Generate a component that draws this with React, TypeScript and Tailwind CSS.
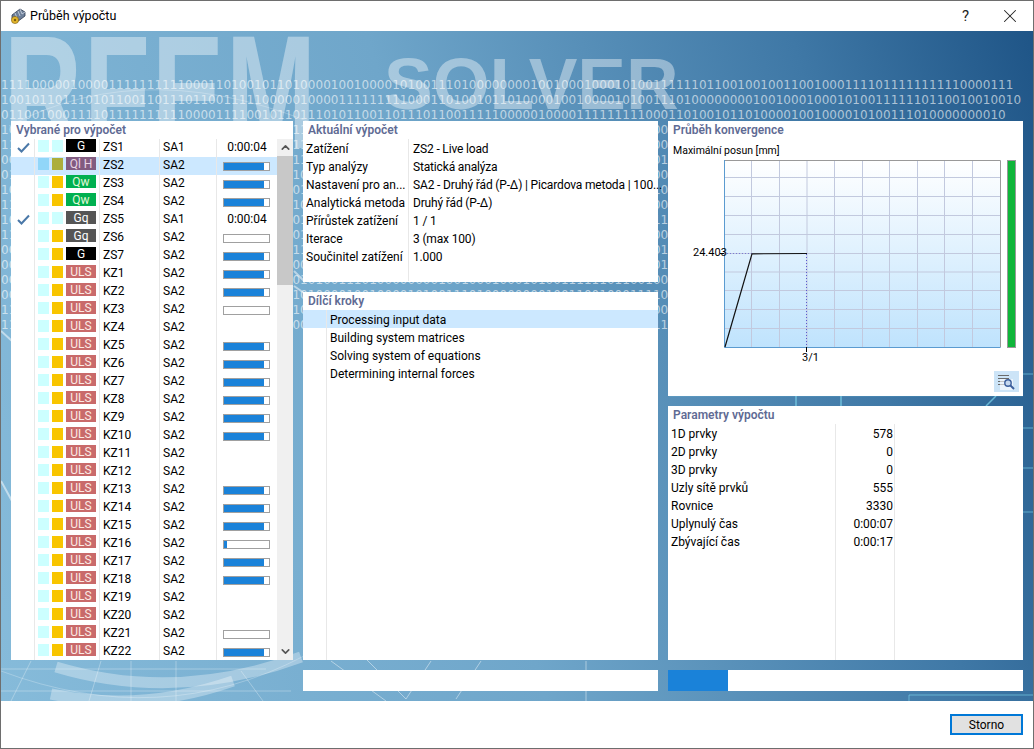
import { ChevronDown, ChevronUp, X } from "lucide-react"

const bits = [
  "111100000100001111111111000110100101101000010010000101001110100000000100100010001010011111101100100100110010001111011111111110000111",
  "10010110111010110011011101100111110000010000111111111000110100101101000010010000101001110100000000100100010001010011111101100100100101",
  "01100100011110111111111100001111001011011101011001101110110011111000001000011111111100011010010110100001001000010100111010000000010",
]

const binaryRows = Array.from({ length: 17 }, (_, i) => {
  const base = bits[i % 3]
  const shift = i < 3 ? 0 : (i * 17) % 60
  return (base.slice(shift) + base.slice(0, shift)).slice(0, 133)
})

type Row = { id: string; tag: string; sa: string; sw?: boolean; state: string; check?: boolean; sel?: boolean }

const zs: Row[] = [
  { id: "ZS1", tag: "G", sa: "SA1", sw: true, state: "time", check: true },
  { id: "ZS2", tag: "Ql H", sa: "SA2", state: "full", sel: true },
  { id: "ZS3", tag: "Qw", sa: "SA2", state: "full" },
  { id: "ZS4", tag: "Qw", sa: "SA2", state: "full" },
  { id: "ZS5", tag: "Gq", sa: "SA1", sw: true, state: "time", check: true },
  { id: "ZS6", tag: "Gq", sa: "SA2", state: "empty" },
  { id: "ZS7", tag: "G", sa: "SA2", state: "full" },
]

const kzStates = [
  "full", "full", "empty", "none", "full", "full", "full", "full", "full", "full", "none",
  "none", "full", "full", "full", "low", "full", "full", "none", "none", "empty", "full",
]

const rows: Row[] = [
  ...zs,
  ...kzStates.map((state, i) => ({ id: `KZ${i + 1}`, tag: "ULS", sa: "SA2", state })),
]

const tagClass: Record<string, string> = {
  G: "bg-black text-white",
  "Ql H": "bg-[#815b80] text-[#e8d4e4]",
  Qw: "bg-[#00b050] text-[#e4f7d8]",
  Gq: "bg-[#555555] text-white",
  ULS: "bg-[#c96a6a] text-[#fbe9e4]",
}

const current = [
  ["Zatížení", "ZS2 - Live load"],
  ["Typ analýzy", "Statická analýza"],
  ["Nastavení pro an...", "SA2 - Druhý řád (P-Δ) | Picardova metoda | 100..."],
  ["Analytická metoda", "Druhý řád (P-Δ)"],
  ["Přírůstek zatížení", "1 / 1"],
  ["Iterace", "3 (max 100)"],
  ["Součinitel zatížení", "1.000"],
]

const steps = ["Processing input data", "Building system matrices", "Solving system of equations", "Determining internal forces"]

const params = [
  ["1D prvky", "578"],
  ["2D prvky", "0"],
  ["3D prvky", "0"],
  ["Uzly sítě prvků", "555"],
  ["Rovnice", "3330"],
  ["Uplynulý čas", "0:00:07"],
  ["Zbývající čas", "0:00:17"],
]

function PanelTitle({ children }: { children: string }) {
  return <div className="h-[18px] text-[12px] leading-[18px] font-semibold text-[#5f6b94] truncate">{children}</div>
}

function Bar({ state }: { state: string }) {
  if (state === "none") return null
  if (state === "time") return <span className="w-full -translate-y-px text-center">0:00:04</span>
  return (
    <div className="ml-[6px] mt-[1px] h-[9px] w-[47px] border border-[#a0a0a0] bg-white">
      {state === "full" && <div className="h-full w-[40px] bg-[#1a82d9]" />}
      {state === "low" && <div className="h-full w-[3px] bg-[#1a82d9]" />}
    </div>
  )
}

function LoadRow({ row }: { row: Row }) {
  const first = row.sel ? "bg-[#91d6f9]" : "bg-[#ccffff]"
  const second = row.sel ? "bg-[#acae3c]" : row.sw ? "bg-[#ccffff]" : "bg-[#f8c500]"
  return (
    <div className={`flex h-[18px] shrink-0 items-center leading-[17px] ${row.sel ? "bg-[#cce8ff]" : ""}`}>
      <div className="flex h-full w-[23px] items-center justify-center">
        {row.check && (
          <svg width="13" height="11" viewBox="0 0 13 11" className="ml-[1px] mb-[1px]">
            <path d="M1 6 L4.5 9.5 L12 1.5" fill="none" stroke="#4a78a8" strokeWidth="2" />
          </svg>
        )}
      </div>
      <div className="flex h-full w-[65px] items-start gap-[3px] border-l border-[#e8e8e8] pl-[3px]">
        <div className={`mt-[1px] h-[12px] w-[11px] ${first}`} />
        <div className={`mt-[1px] h-[12px] w-[11px] ${second}`} />
        <div className={`h-[13px] w-[30px] text-center text-[12px] leading-[14px] ${tagClass[row.tag]}`}>{row.tag}</div>
      </div>
      <div className="h-full w-[60px] border-l border-[#e8e8e8] pl-[3px]">{row.id}</div>
      <div className="h-full w-[57px] border-l border-[#e8e8e8] pl-[3px]">{row.sa}</div>
      <div className="flex h-full w-[61px] items-center border-l border-[#e8e8e8]">
        <Bar state={row.state} />
      </div>
    </div>
  )
}

function Chart() {
  const vs = [27, 55, 82.5, 110, 138, 165, 193, 220, 248]
  const hs = [17, 36, 55, 74, 93, 111.5, 130, 149, 168]
  return (
    <svg width="277" height="188" viewBox="0 0 277 188" className="block">
      <defs>
        <linearGradient id="plot" x1="0" y1="0" x2="0" y2="1">
          <stop offset="0" stopColor="#ffffff" />
          <stop offset="1" stopColor="#bfe3fd" />
        </linearGradient>
      </defs>
      <rect x="0" y="0" width="277" height="188" fill="url(#plot)" />
      {vs.map((x) => (
        <line key={x} x1={x + 0.5} y1="0" x2={x + 0.5} y2="187" stroke="#c2c9de" />
      ))}
      {hs.map((y) => (
        <line key={y} x1="0" y1={y + 0.5} x2="276" y2={y + 0.5} stroke="#c2c9de" />
      ))}
      <path d="M0.5 0.5 H276.5 V187" fill="none" stroke="#999999" />
      <path d="M0.5 0 V187.5 H276.5" fill="none" stroke="#5b9bd0" />
      <line x1="0" y1="93.5" x2="28" y2="93.5" stroke="#7a7ad0" strokeDasharray="1 2" />
      <line x1="82.5" y1="94" x2="82.5" y2="187" stroke="#5a5ad0" strokeDasharray="1 2" />
      <path d="M1 187 L28 93.8 L83 93.5" fill="none" stroke="#111111" strokeWidth="1.2" />
    </svg>
  )
}

function Background() {
  return (
    <div className="absolute inset-0 overflow-hidden">
      <div className="absolute left-[3px] top-[-20px] origin-top-left scale-y-[1.5] font-['Liberation_Sans',sans-serif] text-[108px] leading-[108px] font-bold tracking-[2px] text-white/40">
        RFEM
      </div>
      <div className="absolute left-[383px] top-[16px] font-['Liberation_Sans',sans-serif] text-[73px] leading-[73px] font-bold text-white/40">
        SOLVER
      </div>
      <svg width="1032" height="670" viewBox="0 0 1032 670" className="absolute left-0 top-0">
        <path d="M8 95 Q150 20 330 100" fill="none" stroke="#ffffff" strokeOpacity="0.25" />
        <path d="M55 636 Q175 672 300 626" fill="none" stroke="#ffffff" strokeOpacity="0.32" strokeWidth="11" />
        <path d="M50 663 Q140 682 232 650" fill="none" stroke="#ffffff" strokeOpacity="0.32" strokeWidth="11" />
        <path d="M0 640 Q160 700 303 625" fill="none" stroke="#ffffff" strokeOpacity="0.25" />
        <path d="M0 660 H290 M0 638 H265" stroke="#ffffff" strokeOpacity="0.3" />
        <path d="M30 630 L10 670 M100 630 L88 670 M175 630 V670 M130 630 V670 M240 640 L262 670" stroke="#ffffff" strokeOpacity="0.3" />
        <path d="M365 628 L405 668 L430 630 M330 630 L385 670 M480 630 L455 668 M585 630 V670" fill="none" stroke="#ffffff" strokeOpacity="0.45" />
        <path d="M795 365 V375 M840 365 V375 M985 375 L995 365" stroke="#7fd8ee" strokeOpacity="0.7" strokeWidth="1.5" />
        <path d="M908 670 V664 H1032 M1022 343 H1032 M1022 397 H1032 M1022 437 H1032 M1022 481 H1032" fill="none" stroke="#7fd8ee" strokeOpacity="0.6" />
        <path d="M668 365 H1022" stroke="#7fd8ee" strokeOpacity="0.25" />
        <path d="M0 300 L11 310 M0 450 L11 470 M293 240 L303 250 M293 255 L303 262" stroke="#ffffff" strokeOpacity="0.5" strokeWidth="2" />
      </svg>
      <div className="absolute left-0 top-[47px] font-['DejaVu_Sans',sans-serif] text-[12px] leading-[15px] tracking-[0.035px] text-white/60">
        {binaryRows.map((r, i) => (
          <div key={i} className="h-[15px] whitespace-pre">
            {r}
          </div>
        ))}
      </div>
    </div>
  )
}

export default function App() {
  return (
    <div className="flex h-[749px] w-[1034px] flex-col overflow-hidden border border-[#6e6e6e] bg-white font-['Roboto',sans-serif] text-[12px] text-black">
      <header className="flex h-[30px] shrink-0 items-center pl-[8px]">
        <svg width="18" height="18" viewBox="0 0 18 18" className="shrink-0">
          <path d="M3 8 L11 2 L16 5 L16 9 L8 15 L3 12 Z" fill="#6d7f99" stroke="#2d3a50" strokeWidth="0.8" />
          <path d="M11 2 L13 7 L16 5 M6 6 L8 11 M9 4 L11 9" fill="none" stroke="#cfd8e4" strokeWidth="0.8" />
          <circle cx="6" cy="13" r="3.6" fill="#e2b52c" stroke="#7a5d10" strokeWidth="0.6" />
          <circle cx="6" cy="13" r="1.2" fill="#7a5d10" />
        </svg>
        <span className="ml-[3px] text-[12.5px]">Průběh výpočtu</span>
        <span className="ml-auto mr-[30px] text-[15px] text-[#222222]">?</span>
        <X className="mr-[12px] h-[22px] w-[22px] text-[#222222]" strokeWidth={1.1} />
      </header>

      <main className="relative flex h-[670px] shrink-0 gap-[10px] bg-[linear-gradient(75deg,#86bbda_0%,#6fa6ca_45%,#3f78a6_80%,#1f5587_100%)] pt-[90px] pl-[10px]">
        <Background />

        <section className="relative flex h-[539px] w-[282px] shrink-0 flex-col overflow-hidden bg-white">
          <div className="pl-[5px]">
            <PanelTitle>Vybrané pro výpočet</PanelTitle>
          </div>
          <div className="flex min-h-0 flex-1">
            <div className="flex w-[266px] flex-col overflow-hidden">
              {rows.map((row) => (
                <LoadRow key={row.id} row={row} />
              ))}
            </div>
            <div className="flex w-[16px] flex-col bg-[#f0f0f0]">
              <div className="flex h-[17px] items-center justify-center">
                <ChevronUp className="h-[13px] w-[13px] text-[#555555]" strokeWidth={3} />
              </div>
              <div className="h-[129px] bg-[#c8c8c8]" />
              <div className="mt-auto flex h-[17px] items-center justify-center">
                <ChevronDown className="h-[13px] w-[13px] text-[#555555]" strokeWidth={3} />
              </div>
            </div>
          </div>
        </section>

        <div className="relative flex w-[355px] shrink-0 flex-col">
          <section className="h-[161px] bg-white">
            <div className="pl-[5px]">
              <PanelTitle>Aktuální výpočet</PanelTitle>
            </div>
            <div className="flex h-[142px]">
              <div className="w-[106px] shrink-0 border-r border-[#e8e8e8] pl-[3px]">
                {current.map(([label]) => (
                  <div key={label} className="h-[18px] whitespace-nowrap leading-[20px]">
                    {label}
                  </div>
                ))}
              </div>
              <div className="pl-[4px] tracking-[-0.16px]">
                {current.map(([label, value]) => (
                  <div key={label} className="h-[18px] whitespace-nowrap leading-[20px]">
                    {value}
                  </div>
                ))}
              </div>
            </div>
          </section>
          <section className="mt-[10px] h-[368px] bg-white">
            <div className="pl-[5px]">
              <PanelTitle>Dílčí kroky</PanelTitle>
            </div>
            <div className="relative">
              {steps.map((step, i) => (
                <div key={step} className={`h-[18px] pl-[27px] leading-[20px] ${i === 0 ? "bg-[#cce8ff]" : ""}`}>
                  {step}
                </div>
              ))}
              <div className="absolute bottom-[-278px] left-[23px] top-0 w-px bg-[#e8e8e8]" />
            </div>
          </section>
          <div className="mt-[10px] h-[21px] bg-white" />
        </div>

        <div className="relative flex w-[355px] shrink-0 flex-col">
          <section className="relative h-[275px] bg-white pl-[5px]">
            <PanelTitle>Průběh konvergence</PanelTitle>
            <div className="mt-[3px] h-[18px] text-[10.5px] leading-[18px]">Maximální posun [mm]</div>
            <div className="ml-[51px] flex items-start gap-[6px]">
              <Chart />
              <div className="h-[188px] w-[9px] border border-[#999999] bg-[#0fb53a]" />
            </div>
            <span className="absolute left-[25px] top-[124px] text-[11px] leading-[16px]">24.403</span>
            <div className="absolute left-[52px] top-[132px] h-px w-[4px] bg-black" />
            <span className="absolute left-[134px] top-[229px] text-[11px] leading-[16px]">3/1</span>
            <div className="absolute left-[138px] top-[226px] h-[5px] w-px bg-black" />
            <button className="absolute left-[326px] top-[250px] flex h-[21px] w-[25px] items-center justify-center bg-[#cce4f7]">
              <svg width="17" height="16" viewBox="0 0 17 16">
                <path d="M0 1.5 H11 M0 4.5 H11 M0 7.5 H7 M0 10.5 H7" stroke="#6b6b6b" />
                <rect x="2" y="5" width="13" height="11" fill="#ffffff" fillOpacity="0.6" />
                <circle cx="10" cy="9" r="3.2" fill="#c6d8ee" stroke="#3c5f9c" strokeWidth="1.4" />
                <path d="M12.5 11.5 L16 15" stroke="#3c5f9c" strokeWidth="2" />
              </svg>
            </button>
          </section>
          <section className="mt-[10px] h-[254px] bg-white">
            <div className="pl-[5px]">
              <PanelTitle>Parametry výpočtu</PanelTitle>
            </div>
            <div className="flex h-[236px]">
              <div className="w-[168px] shrink-0 border-r border-[#e8e8e8] pl-[3px]">
                {params.map(([label]) => (
                  <div key={label} className="h-[18px] leading-[20px]">
                    {label}
                  </div>
                ))}
              </div>
              <div className="w-[59px] shrink-0 border-r border-[#e8e8e8] pr-[1px] text-right">
                {params.map(([label, value]) => (
                  <div key={label} className="h-[18px] leading-[20px]">
                    {value}
                  </div>
                ))}
              </div>
            </div>
          </section>
          <div className="mt-[10px] h-[21px] bg-white">
            <div className="h-full w-[60px] bg-[#1a82d9]" />
          </div>
        </div>
      </main>

      <footer className="flex flex-1 items-start justify-end pr-[10px] pt-[13px]">
        <button className="h-[21px] w-[73px] border-2 border-[#0078d7] bg-[#e1e1e1] text-[12px] leading-[16px]">Storno</button>
      </footer>
    </div>
  )
}
